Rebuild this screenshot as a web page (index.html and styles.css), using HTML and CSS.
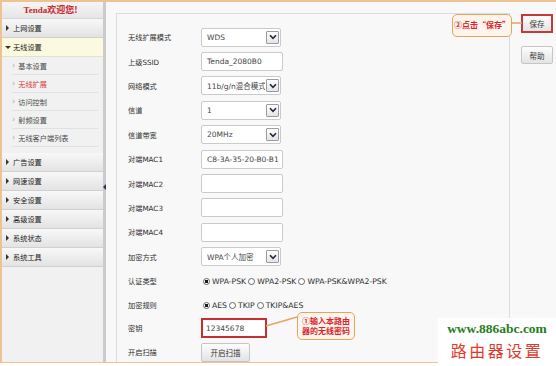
FILE: index.html
```html
<!DOCTYPE html>
<html lang="zh-CN">
<head>
<meta charset="utf-8">
<title>无线扩展</title>
<link rel="stylesheet" href="styles.css">
</head>
<body>
<div class="frame">
  <aside class="sidebar">
    <div class="brand"><span class="brand-en">Tenda</span>欢迎您!</div>
    <div class="nav-item">上网设置</div>
    <div class="nav-item open">无线设置</div>
    <ul class="sub">
      <li>基本设置</li>
      <li class="active">无线扩展</li>
      <li>访问控制</li>
      <li>射频设置</li>
      <li>无线客户端列表</li>
    </ul>
    <div class="nav-item">广告设置</div>
    <div class="nav-item">网速设置</div>
    <div class="nav-item">安全设置</div>
    <div class="nav-item">高级设置</div>
    <div class="nav-item">系统状态</div>
    <div class="nav-item">系统工具</div>
  </aside>
  <div class="divider"><span class="collapse"></span></div>
  <main class="main">
    <section class="panel">
      <div class="form">
        <div class="label">无线扩展模式</div>
        <div class="field select w80"><span class="val">WDS</span><span class="arrow"><svg viewBox="0 0 8 6" width="8" height="6"><path d="M1 1.2 L4 4.4 L7 1.2" fill="none" stroke="#1d2a44" stroke-width="1.6"/></svg></span></div>

        <div class="label">上级SSID</div>
        <div class="field input w82"><span class="val">Tenda_2080B0</span></div>

        <div class="label">网络模式</div>
        <div class="field select w80"><span class="val">11b/g/n混合模式</span><span class="arrow"><svg viewBox="0 0 8 6" width="8" height="6"><path d="M1 1.2 L4 4.4 L7 1.2" fill="none" stroke="#1d2a44" stroke-width="1.6"/></svg></span></div>

        <div class="label">信道</div>
        <div class="field select w80"><span class="val">1</span><span class="arrow"><svg viewBox="0 0 8 6" width="8" height="6"><path d="M1 1.2 L4 4.4 L7 1.2" fill="none" stroke="#1d2a44" stroke-width="1.6"/></svg></span></div>

        <div class="label">信道带宽</div>
        <div class="field select w80"><span class="val">20MHz</span><span class="arrow"><svg viewBox="0 0 8 6" width="8" height="6"><path d="M1 1.2 L4 4.4 L7 1.2" fill="none" stroke="#1d2a44" stroke-width="1.6"/></svg></span></div>

        <div class="label">对端MAC1</div>
        <div class="field input w82"><span class="val">C8-3A-35-20-B0-B1</span></div>

        <div class="label">对端MAC2</div>
        <div class="field input w82"></div>

        <div class="label">对端MAC3</div>
        <div class="field input w82"></div>

        <div class="label">对端MAC4</div>
        <div class="field input w82"></div>

        <div class="label">加密方式</div>
        <div class="field select w80"><span class="val">WPA个人加密</span><span class="arrow"><svg viewBox="0 0 8 6" width="8" height="6"><path d="M1 1.2 L4 4.4 L7 1.2" fill="none" stroke="#1d2a44" stroke-width="1.6"/></svg></span></div>

        <div class="label">认证类型</div>
        <div class="radios">
          <span class="radio checked"></span><span class="opt">WPA-PSK</span>
          <span class="radio"></span><span class="opt">WPA2-PSK</span>
          <span class="radio"></span><span class="opt">WPA-PSK&amp;WPA2-PSK</span>
        </div>

        <div class="label">加密规则</div>
        <div class="radios">
          <span class="radio checked"></span><span class="opt">AES</span>
          <span class="radio"></span><span class="opt">TKIP</span>
          <span class="radio"></span><span class="opt">TKIP&amp;AES</span>
        </div>

        <div class="label">密钥</div>
        <div class="field input key"><span class="val">12345678</span></div>

        <div class="label">开启扫描</div>
        <div><button class="btn scan">开启扫描</button></div>
      </div>
    </section>
    <div class="actions">
      <button class="btn side save">保存</button>
      <button class="btn side">帮助</button>
    </div>
  </main>
</div>

<svg class="leaders" width="556" height="366" viewBox="0 0 556 366">
  <line x1="511" y1="23" x2="522" y2="23" stroke="#e3a466" stroke-width="1.5"/>
  <line x1="266" y1="326" x2="297" y2="317" stroke="#e3a466" stroke-width="1.5"/>
</svg>
<div class="callout callout-save">②点击“保存”</div>
<div class="callout callout-key">①输入本路由<br>器的无线密码</div>

<div class="watermark">
  <div class="wm-url">www.886abc.com</div>
  <div class="wm-cn">路由器设置</div>
</div>
</body>
</html>
```

FILE: styles.css
```css
html, body {
  margin: 0;
  padding: 0;
}
body {
  width: 556px;
  height: 366px;
  overflow: hidden;
  position: relative;
  background: #ffffff;
  font-family: "DejaVu Sans", "Noto Sans CJK SC", sans-serif;
  font-size: 7.2px;
  color: #2e2e2e;
}

.frame {
  display: flex;
  height: 363px;
  box-sizing: border-box;
  border-top: 2px solid #eec393;
  border-left: 2px solid #eec393;
  border-bottom: 1px solid #eec393;
  background: #f7f7f7;
}

/* ---------- sidebar ---------- */
.sidebar {
  width: 101px;
  flex: none;
  background: #f1f1f1;
}
.brand {
  height: 17px;
  box-sizing: border-box;
  border-bottom: 1px solid #d6d6d6;
  background: linear-gradient(#f5f5f5, #e6e6e6);
  text-align: center;
  line-height: 16px;
  padding-right: 4px;
  font-family: "Noto Sans CJK SC", sans-serif;
  font-weight: bold;
  font-size: 9px;
  color: #c8262c;
}
.brand-en {
  font-family: "Liberation Serif", serif;
}
.nav-item {
  height: 19px;
  box-sizing: border-box;
  border-bottom: 1px solid #d0d0d0;
  background: linear-gradient(#f8f8f8, #e3e3e3);
  display: flex;
  align-items: center;
  padding-left: 4px;
  color: #222;
}
.nav-item::before {
  content: "";
  width: 0;
  height: 0;
  border-left: 3px solid #333;
  border-top: 3px solid transparent;
  border-bottom: 3px solid transparent;
  margin-right: 4px;
}
.nav-item.open {
  background: #fbf9df;
  border-bottom-color: #e4e2c8;
}
.nav-item.open::before {
  border-left: 3px solid transparent;
  border-right: 3px solid transparent;
  border-top: 3px solid #333;
  border-bottom: 0;
  margin-left: -1px;
  margin-right: 2px;
}
.sub {
  list-style: none;
  margin: 0 0 6px;
  padding: 0;
}
.sub li {
  height: 18px;
  box-sizing: border-box;
  margin: 0 5px 0 10px;
  border-bottom: 1px solid #e1e1e1;
  display: flex;
  align-items: center;
  color: #4a4a4a;
}
.sub li::before {
  content: "›";
  color: #aaa;
  font-size: 8px;
  margin-right: 3px;
}
.sub li.active {
  color: #d9383a;
}

/* ---------- divider ---------- */
.divider {
  width: 3px;
  flex: none;
  background: #cbcbcb;
  display: flex;
  flex-direction: column;
}
.collapse {
  width: 0;
  height: 0;
  margin-top: 182px;
  border-right: 3px solid #26344f;
  border-top: 3px solid transparent;
  border-bottom: 3px solid transparent;
}

/* ---------- main ---------- */
.main {
  flex: 1;
  display: flex;
  padding: 11px 0 0 10px;
  background: #f8f8f8;
}
.panel {
  width: 394px;
  box-sizing: border-box;
  flex: none;
  border: 1px solid #dcdcdc;
  border-bottom: 0;
  background: #f8f8f8;
  padding: 11px 0 0 11px;
}
.form {
  display: grid;
  grid-template-columns: 73px 1fr;
  grid-template-rows: repeat(12, 24.4px) 21px 27px;
  align-items: center;
}
.field {
  height: 19px;
  box-sizing: border-box;
  border: 1px solid #cacaca;
  border-radius: 2px;
  background: #fff;
  display: flex;
  align-items: center;
  padding-left: 5px;
  color: #444;
  font-size: 7.5px;
}
.val {
  flex: 1;
  min-width: 0;
  overflow: hidden;
  white-space: nowrap;
}
.w80 { width: 80px; }
.w82 { width: 82px; }
.select .arrow {
  flex: none;
  margin-left: 1px;
  margin-right: 1px;
  width: 13px;
  height: 13px;
  box-sizing: border-box;
  border: 1px solid #9c9c9c;
  border-radius: 1px;
  background: linear-gradient(#ffffff, #e4e4e4);
  display: flex;
  align-items: center;
  justify-content: center;
}
.key {
  width: 66px;
  height: 20px;
  border: 2px solid #c62f2f;
  border-radius: 0;
  padding-left: 3px;
}

.radios {
  display: flex;
  align-items: center;
  padding-left: 2px;
  font-size: 7.7px;
}
.radio {
  flex: none;
  width: 7px;
  height: 7px;
  box-sizing: border-box;
  border: 1px solid #666;
  border-radius: 50%;
  background: #fff;
  margin-right: 2px;
}
.radio.checked {
  background: radial-gradient(circle, #1a1a1a 0 1.6px, #fff 2px);
}
.opt {
  margin-right: 2px;
  white-space: nowrap;
}

.btn {
  font-family: "Noto Sans CJK SC", sans-serif;
  font-size: 7.5px;
  color: #333;
  border: 1px solid #c6c6c6;
  border-radius: 2px;
  background: linear-gradient(#fdfdfd, #e3e3e3);
  padding: 0;
  display: flex;
  align-items: center;
  justify-content: center;
}
.scan {
  width: 49px;
  height: 19px;
}

.actions {
  display: flex;
  flex-direction: column;
  gap: 13px;
  padding: 1px 0 0 11px;
}
.side {
  width: 32px;
  height: 18px;
}
.side.save {
  height: 19px;
  border: 2px solid #c33a3a;
  border-radius: 0;
}

/* ---------- annotations ---------- */
.leaders {
  position: absolute;
  left: 0;
  top: 0;
  pointer-events: none;
}
.callout {
  position: absolute;
  box-sizing: border-box;
  border: 1.5px solid #e3a466;
  border-radius: 5px;
  background: #fdf5ec;
  color: #d8262e;
  font-family: "Noto Sans CJK SC", sans-serif;
  font-weight: bold;
  font-size: 8px;
  text-align: center;
  line-height: 10px;
}
.callout-save {
  left: 452px;
  top: 14px;
  width: 60px;
  height: 23px;
  line-height: 20px;
}
.callout-key {
  left: 297px;
  top: 312px;
  width: 58px;
  height: 28px;
  padding-top: 3px;
}

.watermark {
  position: absolute;
  left: 438px;
  top: 318px;
  width: 118px;
  height: 48px;
  background: #fff;
  text-align: center;
}
.wm-url {
  font-family: "Liberation Serif", serif;
  font-weight: bold;
  font-size: 13.5px;
  color: #1f7d22;
  line-height: 16px;
  margin-top: 3px;
}
.wm-cn {
  font-family: "Noto Sans CJK SC", sans-serif;
  font-size: 16px;
  line-height: 20px;
  color: #e2392c;
  letter-spacing: 2.5px;
  margin-top: 3px;
}
```
